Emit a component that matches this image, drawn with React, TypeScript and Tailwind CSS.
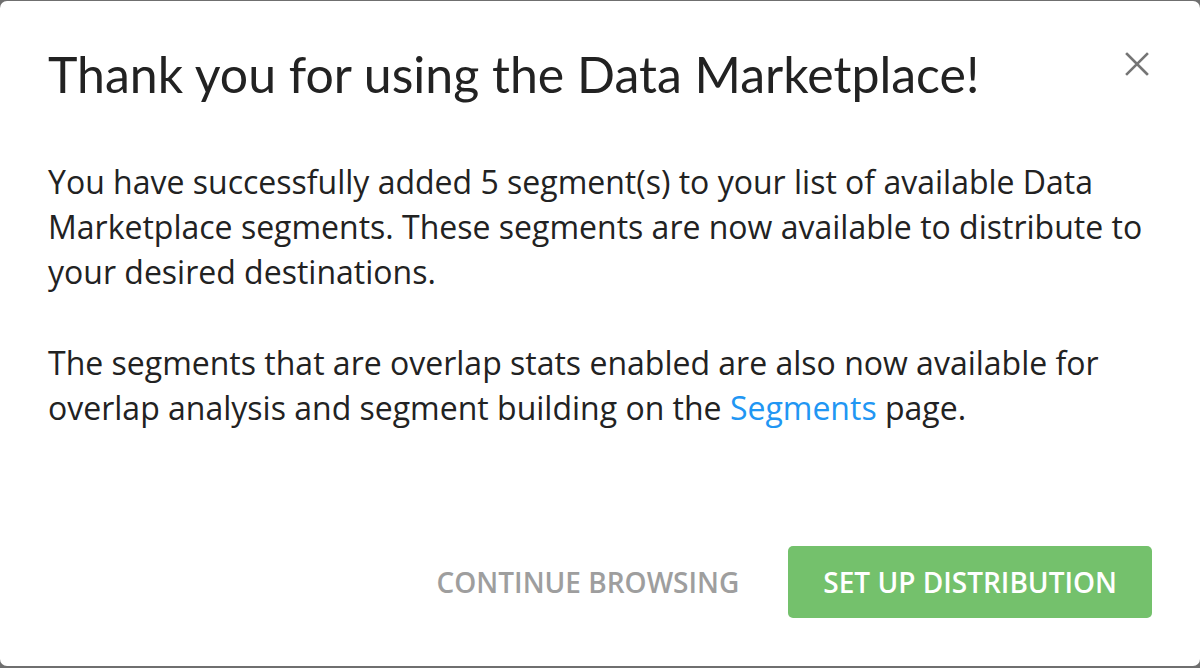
import React from 'react';

const CloseIcon = () => (
  <svg width="26" height="26" viewBox="0 0 26 26" fill="none" stroke="#757575" strokeWidth="2.6" strokeLinecap="square">
    <path d="M3 3 L23 23 M23 3 L3 23" />
  </svg>
);

export default function App() {
  return (
    <div className="w-[1200px] h-[668px] bg-[#6f6f6f] pt-px pb-[2px] overflow-hidden">
      <div className="h-full bg-white rounded-[7px] flex flex-col px-[48px]">
        {/* Header */}
        <div className="flex items-start justify-between pt-[44px]">
          <h1 className="text-[50px] leading-[58px] text-[#222222] font-['Lato',sans-serif]">
            Thank you for using the Data Marketplace!
          </h1>
          <button className="mt-[6px] mr-[2px]">
            <CloseIcon />
          </button>
        </div>

        {/* Body */}
        <div className="mt-[56px] text-[32px] leading-[45px] text-[#222222] font-['Open_Sans',sans-serif] space-y-[46px]">
          <p>
            You have successfully added 5 segment(s) to your list of available Data Marketplace segments. These
            segments are now available to distribute to your desired destinations.
          </p>
          <p>
            The segments that are overlap stats enabled are also now available for overlap analysis and segment
            building on the <a className="text-[#2196f3]">Segments</a> page.
          </p>
        </div>

        {/* Actions */}
        <div className="mt-auto mb-[48px] flex items-center justify-end gap-[49px] font-['Open_Sans',sans-serif] font-semibold text-[28px]">
          <button className="uppercase text-[#9e9e9e]">Continue Browsing</button>
          <button className="uppercase h-[72px] px-[35px] rounded-[5px] bg-[#74c16c] text-white">Set Up Distribution</button>
        </div>
      </div>
    </div>
  );
}
